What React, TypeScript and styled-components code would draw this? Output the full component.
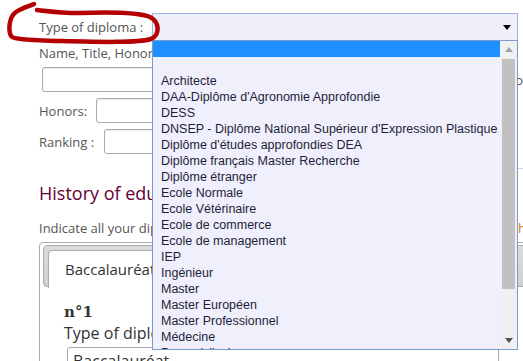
import React from "react";
import styled, { createGlobalStyle } from "styled-components";

const GlobalStyle = createGlobalStyle`
  html, body {
    margin: 0;
    padding: 0;
    background: #ffffff;
  }
  body {
    font-family: "Open Sans", "Liberation Sans", sans-serif;
  }
`;

const diplomas = [
  "",
  "",
  "Architecte",
  "DAA-Diplôme d'Agronomie Approfondie",
  "DESS",
  "DNSEP - Diplôme National Supérieur d'Expression Plastique",
  "Diplôme d'études approfondies DEA",
  "Diplôme français Master Recherche",
  "Diplôme étranger",
  "Ecole Normale",
  "Ecole Vétérinaire",
  "Ecole de commerce",
  "Ecole de management",
  "IEP",
  "Ingénieur",
  "Master",
  "Master Européen",
  "Master Professionnel",
  "Médecine",
  "Paramédical",
];

const App = () => {
  return (
    <>
      <GlobalStyle />
      <Page>
        <Annotation viewBox="0 0 170 50" width="170" height="50">
          <path
            d="M34 4 C30 6 22 8 16 12 C9 17 8 30 11 36 C14 40 32 40 60 41 C100 42 138 43 151 39 C160 35 160 22 150 17 C140 13 110 12 80 13 C60 13 46 11 37 10"
            fill="none"
            stroke="#b40000"
            strokeWidth="4.5"
            strokeLinecap="round"
            strokeLinejoin="round"
          />
        </Annotation>

        <TypeRow>
          <Label $width={113}>Type of diploma :</Label>
          <SelectWrap>
            <Select>
              <Arrow $color="#000" $down />
            </Select>
            <Dropdown>
              <Options>
                {diplomas.map((d, i) => (
                  <Option key={i} $selected={i === 0}>
                    {d}
                  </Option>
                ))}
              </Options>
              <ScrollBar>
                <ScrollButton>
                  <Arrow $color="#a3a3a3" />
                </ScrollButton>
                <Track>
                  <Thumb />
                </Track>
                <ScrollButton>
                  <Arrow $color="#505050" $down />
                </ScrollButton>
              </ScrollBar>
            </Dropdown>
          </SelectWrap>
        </TypeRow>

        <NameLabel>Name, Title, Honors of the diploma :</NameLabel>
        <FieldRow $top={5} $gap={6}>
          <TextInput $width={470} $offset={3} />
          <Label>to</Label>
        </FieldRow>
        <FieldRow $top={6}>
          <Label $width={57}>Honors:</Label>
          <TextInput $width={260} />
        </FieldRow>
        <FieldRow $top={6}>
          <Label $width={65}>Ranking :</Label>
          <TextInput $width={260} />
        </FieldRow>

        <Divider />

        <Heading>History of education</Heading>
        <IndicateRow>
          <Clip>Indicate all your diplomas, from the most recent to the oldest one, in t</Clip>
          <Highlight>he</Highlight>
        </IndicateRow>

        <Panel>
          <TabBar>
            <Tab>Baccalauréat</Tab>
          </TabBar>
          <TabContent>
            <Number>n°1</Number>
            <SubLabel>Type of diploma :</SubLabel>
            <ValueBox>Baccalauréat</ValueBox>
          </TabContent>
        </Panel>
      </Page>
    </>
  );
};

export default App;

const Page = styled.div`
  position: relative;
  width: 523px;
  height: 361px;
  overflow: hidden;
  box-sizing: border-box;
  padding: 13px 0 0 39px;
`;

const Annotation = styled.svg`
  position: absolute;
  left: 0;
  top: 0;
  z-index: 5;
  pointer-events: none;
`;

const TypeRow = styled.div`
  display: flex;
  align-items: center;
  height: 28px;
`;

const Label = styled.span<{ $width?: number }>`
  flex: none;
  width: ${(p) => (p.$width ? `${p.$width}px` : "auto")};
  font-size: 13px;
  line-height: 18px;
  color: #555555;
  white-space: nowrap;
`;

const SelectWrap = styled.div`
  position: relative;
`;

const Select = styled.div`
  box-sizing: border-box;
  width: 366px;
  height: 28px;
  border: 1px solid #9db6e2;
  background: #efeffb;
  display: flex;
  align-items: center;
  justify-content: flex-end;
  padding-right: 6px;
`;

const Arrow = styled.span<{ $color: string; $down?: boolean }>`
  width: 0;
  height: 0;
  border-left: 4px solid transparent;
  border-right: 4px solid transparent;
  ${(p) =>
    p.$down
      ? `border-top: 5px solid ${p.$color};`
      : `border-bottom: 5px solid ${p.$color};`}
`;

const Dropdown = styled.div`
  position: absolute;
  top: 27px;
  left: 0;
  z-index: 2;
  box-sizing: border-box;
  width: 366px;
  height: 310px;
  border: 1px solid #7b9bd3;
  background: #f0f0fc;
  display: flex;
  overflow: hidden;
`;

const Options = styled.div`
  flex: 1;
  overflow: hidden;
`;

const Option = styled.div<{ $selected?: boolean }>`
  height: 16px;
  padding-left: 8px;
  font-family: "Liberation Sans", Arial, sans-serif;
  font-size: 12.5px;
  line-height: 16px;
  color: #1e1e3a;
  white-space: nowrap;
  background: ${(p) => (p.$selected ? "#1e90ff" : "transparent")};
`;

const ScrollBar = styled.div`
  width: 17px;
  flex: none;
  background: #f0f0f0;
  display: flex;
  flex-direction: column;
`;

const ScrollButton = styled.div`
  height: 17px;
  display: flex;
  align-items: center;
  justify-content: center;
`;

const Track = styled.div`
  flex: 1;
  padding: 1px 2px;
`;

const Thumb = styled.div`
  height: 230px;
  background: #c1c1c1;
`;

const NameLabel = styled.div`
  margin-top: 3px;
  font-size: 13px;
  line-height: 18px;
  color: #555555;
  white-space: nowrap;
`;

const FieldRow = styled.div<{ $top: number; $gap?: number }>`
  display: flex;
  align-items: center;
  gap: ${(p) => p.$gap ?? 0}px;
  margin-top: ${(p) => p.$top}px;
`;

const TextInput = styled.div<{ $width: number; $offset?: number }>`
  box-sizing: border-box;
  width: ${(p) => p.$width}px;
  height: 25px;
  margin-left: ${(p) => p.$offset ?? 0}px;
  border: 1px solid #a9a9a9;
  border-radius: 3px;
  background: #ffffff;
  box-shadow: inset 0 1px 1px rgba(0, 0, 0, 0.08);
`;

const Divider = styled.div`
  margin: 14px 0 0 300px;
  height: 1px;
  background: #c6d6ee;
`;

const Heading = styled.h3`
  margin: 11px 0 0;
  font-size: 18px;
  line-height: 26px;
  font-weight: 400;
  color: #660033;
  white-space: nowrap;
`;

const IndicateRow = styled.div`
  display: flex;
  margin-top: 13px;
  font-size: 13px;
  line-height: 18px;
  color: #555555;
  white-space: nowrap;
`;

const Clip = styled.span`
  width: 479px;
  flex: none;
  overflow: hidden;
`;

const Highlight = styled.span`
  color: #cc7a1a;
`;

const Panel = styled.div`
  margin-top: 5px;
  width: 520px;
  height: 140px;
  box-sizing: border-box;
  border: 1px solid #aaaaaa;
  border-radius: 4px;
  padding: 2px 3px;
`;

const TabBar = styled.div`
  box-sizing: border-box;
  height: 42px;
  border: 1px solid #aaaaaa;
  border-radius: 4px;
  background: linear-gradient(#dcdcdc, #cfcfcf);
  padding: 4px 0 0 4px;
  display: flex;
  align-items: flex-start;
`;

const Tab = styled.div`
  height: 37px;
  padding: 0 16px;
  border: 1px solid #aaaaaa;
  border-bottom: none;
  border-radius: 4px 4px 0 0;
  background: #ffffff;
  font-size: 15px;
  line-height: 36px;
  color: #333333;
  white-space: nowrap;
`;

const TabContent = styled.div`
  padding: 16px 0 0 21px;
`;

const Number = styled.div`
  font-family: "DejaVu Serif", "Liberation Serif", serif;
  font-weight: 700;
  font-size: 15px;
  line-height: 18px;
  color: #333333;
`;

const SubLabel = styled.div`
  margin-top: 2px;
  font-size: 16px;
  line-height: 20px;
  color: #333333;
  white-space: nowrap;
`;

const ValueBox = styled.div`
  box-sizing: border-box;
  margin: 4px 0 0 3px;
  width: 432px;
  height: 28px;
  padding-left: 5px;
  border: 1px solid #a9a9a9;
  border-radius: 3px;
  font-size: 16px;
  line-height: 26px;
  color: #333333;
`;
